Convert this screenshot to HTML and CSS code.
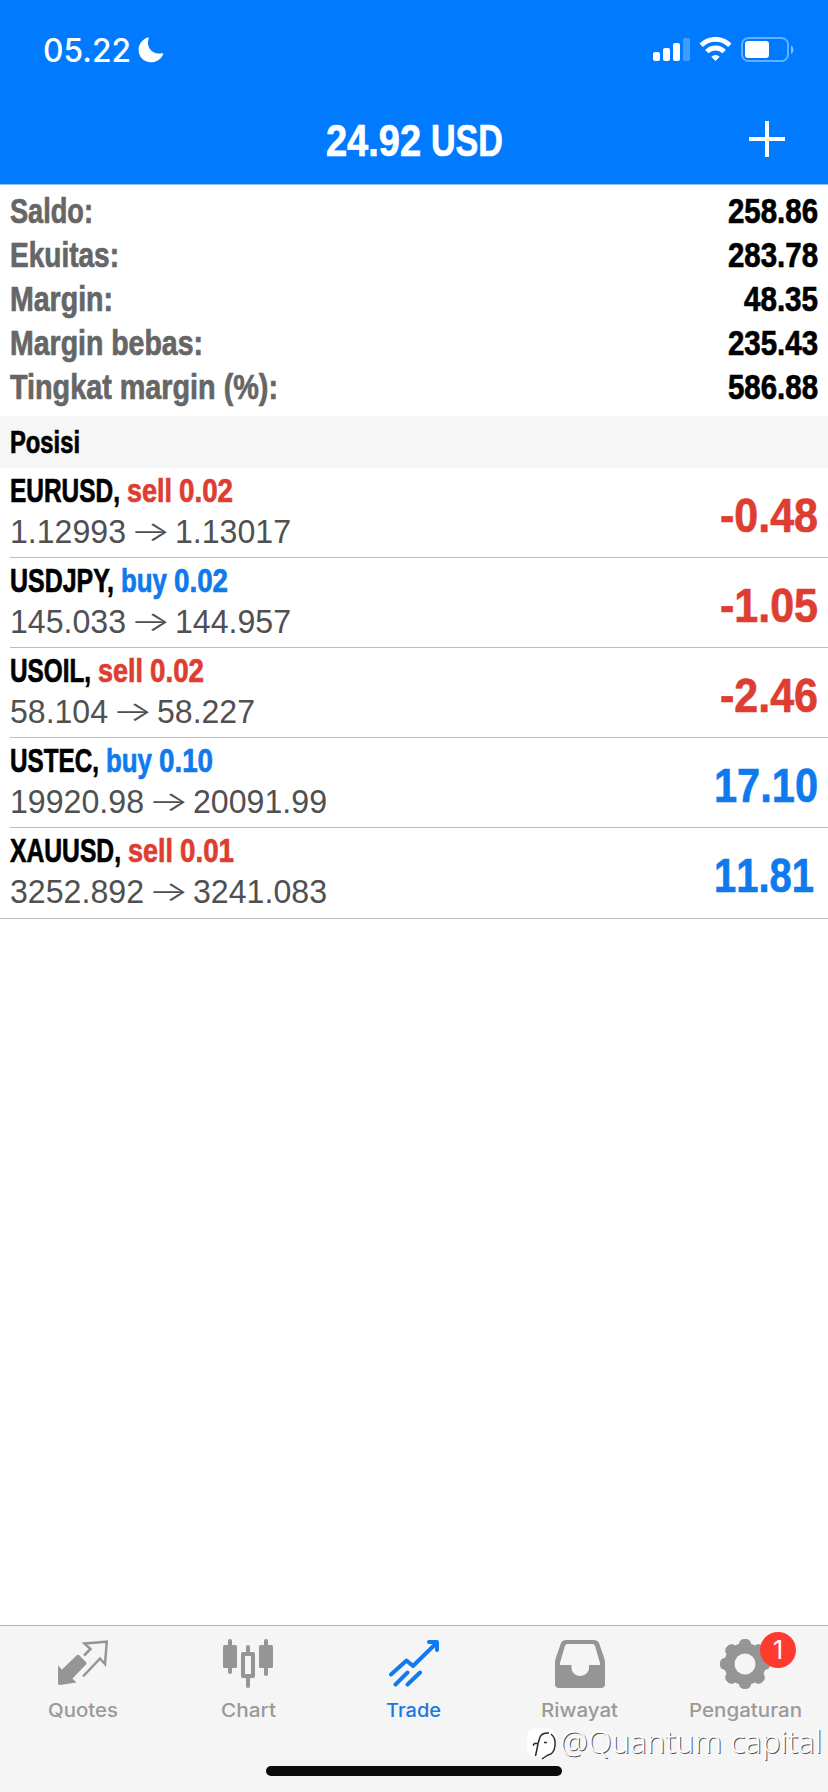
FILE: index.html
```html
<!DOCTYPE html>
<html lang="id">
<head>
<meta charset="utf-8">
<title>Trade</title>
<link rel="stylesheet" href="styles.css">
</head>
<body>
<div class="app">
  <header class="header">
    <div class="status">
      <div class="status-left">
        <span class="clock fit" data-w="88">05.22</span>
        <svg class="moon" width="26" height="26" viewBox="0 0 26 26"><path d="M9.6.6C10.6.2 11 .8 10.7 1.6 7.5 10 14.5 18.5 24 16.2c1-.2 1.4.3 1 1.200C23 22 18.500 25.200 13 25.200 6 25.200.6 19.800.6 12.900.6 7.500 4.300 2.500 9.600.6z" fill="#fff"/></svg>
      </div>
      <svg class="status-icons" width="142" height="26" viewBox="0 0 142 26">
        <g fill="#fff">
          <rect x="0" y="15" width="7" height="9" rx="2"/>
          <rect x="10" y="11" width="7" height="13" rx="2"/>
          <rect x="20" y="6" width="7" height="18" rx="2"/>
          <rect x="30" y="1" width="7" height="23" rx="2" opacity=".25"/>
          <path d="M62.500 24l-4.200-4.200a6 6 0 0 1 8.400 0z"/>
          <rect x="92" y="4" width="24" height="17" rx="3"/>
          <path d="M138 8.500c3.300 1.500 3.300 7 0 8.500z" opacity=".5"/>
        </g>
        <g fill="none" stroke="#fff" stroke-width="4.800">
          <path d="M48.200 8.200a20.300 20.300 0 0 1 28.600 0"/>
          <path d="M53.800 14.600a12.300 12.300 0 0 1 17.400 0"/>
        </g>
        <rect x="89" y="1" width="46" height="23" rx="6.500" fill="none" stroke="#fff" stroke-width="2" opacity=".4"/>
      </svg>
    </div>
    <div class="nav">
      <h1 class="title"><span class="fit" data-w="95">24.92</span><span class="gap"></span><span class="fit" data-w="72">USD</span></h1>
      <svg class="plus" width="36" height="36" viewBox="0 0 36 36"><path d="M18 0v36M0 18h36" stroke="#fff" stroke-width="4"/></svg>
    </div>
  </header>

  <section class="summary">
    <div class="line"><span class="label fit" data-w="83">Saldo:</span><span class="value fit" data-w="90">258.86</span></div>
    <div class="line"><span class="label fit" data-w="109">Ekuitas:</span><span class="value fit" data-w="90">283.78</span></div>
    <div class="line"><span class="label fit" data-w="103">Margin:</span><span class="value fit" data-w="74">48.35</span></div>
    <div class="line"><span class="label fit" data-w="193">Margin bebas:</span><span class="value fit" data-w="90">235.43</span></div>
    <div class="line"><span class="label fit" data-w="268">Tingkat margin (%):</span><span class="value fit" data-w="90">586.88</span></div>
  </section>

  <h2 class="section"><span class="fit" data-w="70">Posisi</span></h2>

  <ul class="positions">
    <li class="row">
      <div class="info">
        <div class="deal"><span class="fit" data-w="110">EURUSD,</span><span class="side sell"><span class="fit" data-w="45">sell</span><span class="fit" data-w="54">0.02</span></span></div>
        <div class="prices"><span class="fit" data-w="116">1.12993</span><span class="arrow fit" data-w="41">→</span><span class="fit" data-w="116">1.13017</span></div>
      </div>
      <div class="profit sell fit" data-w="98">-0.48</div>
    </li>
    <li class="row">
      <div class="info">
        <div class="deal"><span class="fit" data-w="104">USDJPY,</span><span class="side buy"><span class="fit" data-w="46">buy</span><span class="fit" data-w="54">0.02</span></span></div>
        <div class="prices"><span class="fit" data-w="116">145.033</span><span class="arrow fit" data-w="41">→</span><span class="fit" data-w="116">144.957</span></div>
      </div>
      <div class="profit sell fit" data-w="98">-1.05</div>
    </li>
    <li class="row">
      <div class="info">
        <div class="deal"><span class="fit" data-w="81">USOIL,</span><span class="side sell"><span class="fit" data-w="45">sell</span><span class="fit" data-w="54">0.02</span></span></div>
        <div class="prices"><span class="fit" data-w="98">58.104</span><span class="arrow fit" data-w="41">→</span><span class="fit" data-w="98">58.227</span></div>
      </div>
      <div class="profit sell fit" data-w="98">-2.46</div>
    </li>
    <li class="row">
      <div class="info">
        <div class="deal"><span class="fit" data-w="89">USTEC,</span><span class="side buy"><span class="fit" data-w="46">buy</span><span class="fit" data-w="54">0.10</span></span></div>
        <div class="prices"><span class="fit" data-w="134">19920.98</span><span class="arrow fit" data-w="41">→</span><span class="fit" data-w="134">20091.99</span></div>
      </div>
      <div class="profit buy fit" data-w="104">17.10</div>
    </li>
    <li class="row">
      <div class="info">
        <div class="deal"><span class="fit" data-w="111">XAUUSD,</span><span class="side sell"><span class="fit" data-w="45">sell</span><span class="fit" data-w="54">0.01</span></span></div>
        <div class="prices"><span class="fit" data-w="134">3252.892</span><span class="arrow fit" data-w="41">→</span><span class="fit" data-w="134">3241.083</span></div>
      </div>
      <div class="profit-box"><div class="profit buy fit" data-w="100">11.81</div></div>
    </li>
  </ul>

  <nav class="tabs">
    <a class="tab">
      <svg width="50" height="50" viewBox="0 0 50 50">
        <path d="M0 12.500L4 16.500 18.500 2.500Q20 1 21.500 2.500L28 9Q29 10.300 28 11.500L14.500 25.500 18.500 29.500 2 32Q0 32 0 30z" transform="translate(0 14)" fill="#959595"/>
        <path d="M26 16.500L32.500 10 26.500 4.500 48.800 2.700 47 25 42 19.500 25 37.500" fill="none" stroke="#959595" stroke-width="2.500"/>
      </svg>
      <span class="fit" data-w="70">Quotes</span>
    </a>
    <a class="tab">
      <svg width="50" height="50" viewBox="0 0 50 50">
        <g fill="#959595">
          <rect x="0" y="6" width="14" height="23" rx="1.500"/><rect x="5" y="0" width="4" height="35" rx="2"/>
          <rect x="36" y="6" width="14" height="23" rx="1.500"/><rect x="41" y="0" width="4" height="37" rx="2"/>
          <rect x="23" y="6" width="4" height="8" rx="2"/><rect x="23" y="37" width="4" height="12" rx="2"/>
        </g>
        <rect x="20" y="15" width="10" height="22" fill="#f5f5f5" stroke="#959595" stroke-width="4" stroke-linejoin="round"/>
      </svg>
      <span class="fit" data-w="55">Chart</span>
    </a>
    <a class="tab active">
      <svg width="50" height="50" viewBox="0 0 50 50">
        <g fill="none" stroke="#117af0" stroke-width="4" stroke-linecap="round" stroke-linejoin="round">
          <path d="M2 35.500L17.500 21.500 24 27 47.500 4M6.500 45.500L18.500 33.500M18.500 45.500L31 33.500"/>
          <path d="M40 3h8v8"/>
        </g>
      </svg>
      <span class="fit" data-w="55">Trade</span>
    </a>
    <a class="tab">
      <svg width="50" height="50" viewBox="0 0 50 50"><path fill-rule="evenodd" fill="#959595" d="M11 1h28q4 0 5.200 3.500L49.500 20q.5 1.500.5 4v21q0 4-4 4H4q-4 0-4-4V24q0-2.500.5-4L5.800 4.500Q7 1 11 1zM12.500 5q-2 0-2.600 2L5 24v2h11.500v3c0 4 3.500 8 8.500 8s9-4 9-8v-3h11v-2L40 7q-.5-2-2.500-2z"/></svg>
      <span class="fit" data-w="77">Riwayat</span>
    </a>
    <a class="tab">
      <span class="icon-box">
        <svg width="50" height="50" viewBox="0 0 50 50">
          <g fill="#959595">
            <circle cx="25" cy="25" r="21"/>
            <rect x="19" y="0" width="12" height="50" rx="5"/>
            <rect x="19" y="0" width="12" height="50" rx="5" transform="rotate(45 25 25)"/>
            <rect x="19" y="0" width="12" height="50" rx="5" transform="rotate(90 25 25)"/>
            <rect x="19" y="0" width="12" height="50" rx="5" transform="rotate(135 25 25)"/>
          </g>
          <circle cx="25" cy="25" r="10.500" fill="#f5f5f5"/>
        </svg>
        <span class="badge">1</span>
      </span>
      <span class="fit" data-w="113">Pengaturan</span>
    </a>
  </nav>
  <div class="home"></div>
  <div class="watermark">
    <svg width="30" height="34" viewBox="0 0 30 34">
      <path d="M10 0h9q10 0 10 10v9q0 7-7 9.500L16 32v-3h-6Q0 29 0 19v-9Q0 0 10 0z" fill="#fff"/>
      <path d="M6 17.500l1.500-2H11L13 9q2-4.500 9-4M24 6q5 4 4 12t-7 9l-6 4M11 16L8.500 28M17 14.500h3" fill="none" stroke="#2b2b2b" stroke-width="1.500"/>
    </svg>
    <span class="fit" data-w="262">@Quantum capital</span>
  </div>
</div>
<script src="fit.js"></script>
</body>
</html>
```
FILE: styles.css
```css
* { box-sizing: border-box; }
body {
  margin: 0;
  background: #fff;
  font-family: "Liberation Sans", Arial, sans-serif;
  color: #000;
}
.app {
  position: relative;
  display: flex;
  flex-direction: column;
  width: 828px;
  height: 1792px;
  overflow: hidden;
}
.fit {
  display: inline-block;
  flex: none;
  white-space: nowrap;
  transform-origin: 0 50%;
}
.title, .line, .section, .deal, .profit { -webkit-text-stroke: .7px currentColor; }
.header {
  flex: none;
  height: 185px;
  background: #007aff;
  border-bottom: 1px solid #8fc0f7;
  color: #fff;
}
.status {
  display: flex;
  justify-content: space-between;
  padding: 37px 33px 0 43px;
  height: 96px;
}
.status-left { display: flex; gap: 7px; }
.clock { font: 500 32px/28px Inter, sans-serif; }
.status-icons { display: block; }
.nav {
  display: grid;
  grid-template-columns: 1fr auto 1fr;
  align-items: center;
  height: 88px;
  padding: 0 43px;
}
.title {
  grid-column: 2;
  display: flex;
  margin: 0;
  padding-top: 2px;
  font-size: 44.500px;
  line-height: 50px;
  font-weight: 700;
}
.gap { width: 10px; }
.plus { justify-self: end; margin: -2px 0 0; }

.summary {
  flex: none;
  height: 231px;
  padding: 4px 10px 0;
}
.line {
  display: flex;
  justify-content: space-between;
  height: 44px;
  font-size: 34.500px;
  line-height: 44px;
  font-weight: 700;
}
.label { color: #666; }

.section {
  flex: none;
  height: 52px;
  margin: 0;
  padding-left: 10px;
  background: #f6f6f6;
  font-size: 31px;
  line-height: 53px;
}

.positions { flex: 1; margin: 0; padding: 0; list-style: none; }
.row {
  display: flex;
  justify-content: space-between;
  height: 90px;
  margin-left: 10px;
  padding-right: 10px;
  border-bottom: 1px solid #bcbcbf;
}
.row:last-child {
  height: 91px;
  margin-left: 0;
  padding-left: 10px;
}
.deal {
  display: flex;
  gap: 7px;
  height: 45px;
  padding-top: 4px;
  font-size: 33px;
  line-height: 38px;
  font-weight: 700;
}
.side { display: flex; gap: 7px; }
.prices {
  display: flex;
  gap: 4px;
  font-size: 33px;
  line-height: 38px;
  color: #505052;
}
.arrow { font-family: Inter, sans-serif; font-size: 27px; font-weight: 300; }
.sell { color: #de3d31; }
.buy { color: #0f79ee; }
.profit {
  font-size: 49px;
  line-height: 94px;
  font-weight: 700;
  font-kerning: none;
}
.profit-box { padding-right: 4px; }

.tabs {
  flex: none;
  display: grid;
  grid-template-columns: repeat(5, 1fr);
  height: 167px;
  padding-top: 13px;
  border-top: 1px solid #b4b4b4;
  background: #f5f5f5;
}
.tab {
  display: flex;
  flex-direction: column;
  align-items: center;
  gap: 9px;
  font: 500 18.500px/24px Inter, sans-serif;
  color: #9a9a9a;
}
.tab svg { display: block; }
.active { color: #1a78e2; }
.icon-box { position: relative; }
.badge {
  position: absolute;
  left: 40px;
  top: -7px;
  width: 36px;
  height: 36px;
  border-radius: 50%;
  background: #ff3b30;
  color: #fff;
  font-size: 25px;
  line-height: 36px;
  font-weight: 400;
  text-align: center;
}
.home {
  position: absolute;
  left: 266px;
  top: 1766px;
  width: 296px;
  height: 10px;
  border-radius: 5px;
  background: #0b0b0b;
}
.watermark {
  position: absolute;
  left: 527px;
  top: 1728px;
  display: flex;
  gap: 3px;
  font: 300 31px/27px "Noto Sans", sans-serif;
  color: #fff;
  text-shadow: 1px 1px 0 #555;
}
```
FILE: fit.js
```javascript
// Condenses each label horizontally to the advance width in data-w.
document.querySelectorAll('.fit').forEach(function (el) {
  var natural = el.getBoundingClientRect().width;
  var target = parseFloat(el.dataset.w);
  el.style.width = natural + 'px';
  el.style.marginRight = (target - natural) + 'px';
  el.style.transform = 'scaleX(' + target / natural + ')';
});
```
